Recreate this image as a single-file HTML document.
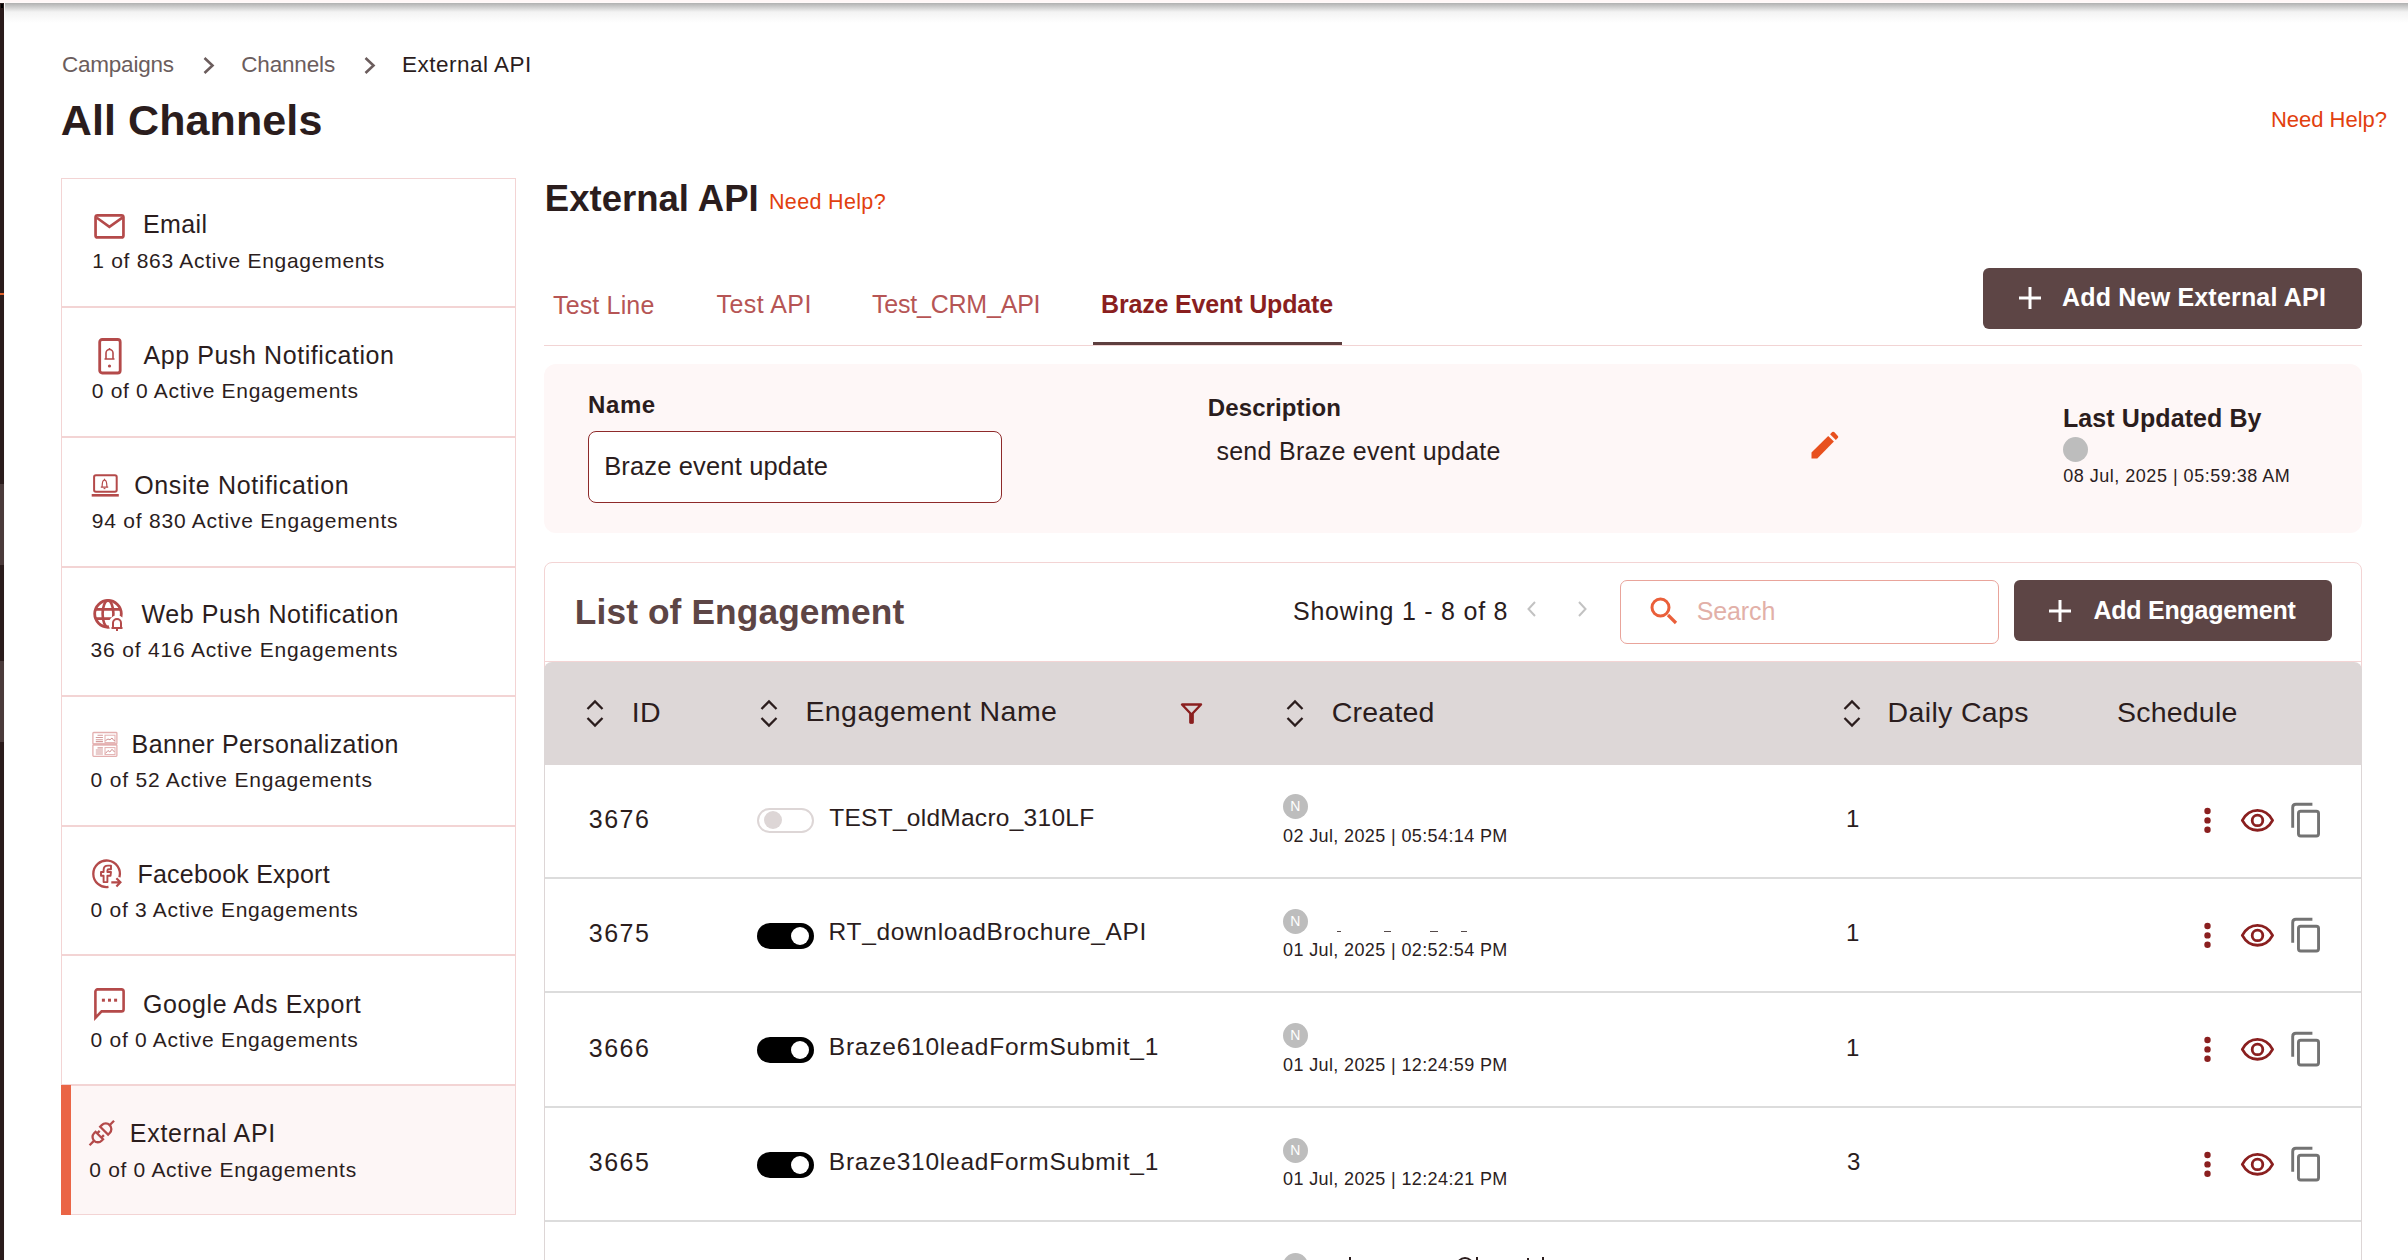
<!DOCTYPE html>
<html><head><meta charset="utf-8"><title>All Channels</title>
<style>
html,body{margin:0;padding:0;background:#fff;}
body{width:2408px;height:1260px;overflow:hidden;position:relative;font-family:"Liberation Sans", sans-serif;}
.t{position:absolute;white-space:nowrap;line-height:1;}
svg{overflow:visible}
</style></head><body>
<div style="position:absolute;left:0px;top:0px;width:2408px;height:2px;background:#fff7f7"></div>
<div style="position:absolute;left:0px;top:2px;width:2408px;height:1px;background:#fffafa"></div>
<div style="position:absolute;left:0px;top:3px;width:2408px;height:20px;background:linear-gradient(#b0b0b0,#f3f3f3 45%,#fff)"></div>
<div style="position:absolute;left:0px;top:3px;width:4px;height:1257px;background:#2a1b1b"></div>
<div style="position:absolute;left:0px;top:484px;width:4px;height:81px;background:#4a3a3a"></div>
<div style="position:absolute;left:0px;top:661px;width:4px;height:81px;background:#4a3a3a"></div>
<div style="position:absolute;left:0px;top:293px;width:4px;height:2px;background:#e0602a"></div>
<div style="position:absolute;left:1px;top:4px;width:1.5px;height:1.5px;background:#000"></div>
<div style="position:absolute;left:1px;top:6px;width:1.5px;height:1.5px;background:#000"></div>
<div style="position:absolute;left:4px;top:3px;width:1px;height:1257px;background:#fafafa"></div>
<div class="t" id="t0" style="left:62.00px;top:54.23px;font-size:22.5px;color:#6b5d5d;font-weight:normal;letter-spacing:-0.224px;">Campaigns</div>
<svg style="position:absolute;left:202px;top:56px;" width="14" height="19" viewBox="0 0 14 19"><path d="M2.5 2 L10.5 9.5 L2.5 17" fill="none" stroke="#6b5d5d" stroke-width="2.6"/></svg>
<div class="t" id="t1" style="left:241.20px;top:54.23px;font-size:22.5px;color:#6b5d5d;font-weight:normal;letter-spacing:-0.154px;">Channels</div>
<svg style="position:absolute;left:363px;top:56px;" width="14" height="19" viewBox="0 0 14 19"><path d="M2.5 2 L10.5 9.5 L2.5 17" fill="none" stroke="#6b5d5d" stroke-width="2.6"/></svg>
<div class="t" id="t2" style="left:402.00px;top:54.23px;font-size:22.5px;color:#2b1d1d;font-weight:normal;letter-spacing:0.491px;">External API</div>
<div class="t" id="t3" style="left:60.80px;top:98.80px;font-size:43px;color:#2b1d1d;font-weight:bold;letter-spacing:0.099px;">All Channels</div>
<div class="t" id="t4" style="left:2271.00px;top:109.18px;font-size:22px;color:#e2400e;font-weight:normal;letter-spacing:-0.020px;">Need Help?</div>
<div style="position:absolute;left:61px;top:178px;width:455px;height:129px;box-sizing:border-box;border:1px solid #f3d4d4;background:#fff"></div>
<div class="t" id="t5" style="left:143.00px;top:211.84px;font-size:25px;color:#2b1d1d;font-weight:normal;letter-spacing:0.405px;">Email</div>
<div class="t" id="t6" style="left:92.20px;top:250.14px;font-size:21px;color:#2b1d1d;font-weight:normal;letter-spacing:0.727px;">1 of 863 Active Engagements</div>
<div style="position:absolute;left:61px;top:307px;width:455px;height:130px;box-sizing:border-box;border:1px solid #f3d4d4;background:#fff"></div>
<div class="t" id="t7" style="left:143.60px;top:342.82px;font-size:25px;color:#2b1d1d;font-weight:normal;letter-spacing:0.569px;">App Push Notification</div>
<div class="t" id="t8" style="left:91.80px;top:379.92px;font-size:21px;color:#2b1d1d;font-weight:normal;letter-spacing:0.684px;">0 of 0 Active Engagements</div>
<div style="position:absolute;left:61px;top:437px;width:455px;height:130px;box-sizing:border-box;border:1px solid #f3d4d4;background:#fff"></div>
<div class="t" id="t9" style="left:134.20px;top:472.60px;font-size:25px;color:#2b1d1d;font-weight:normal;letter-spacing:0.650px;">Onsite Notification</div>
<div class="t" id="t10" style="left:91.80px;top:509.70px;font-size:21px;color:#2b1d1d;font-weight:normal;letter-spacing:0.774px;">94 of 830 Active Engagements</div>
<div style="position:absolute;left:61px;top:567px;width:455px;height:129px;box-sizing:border-box;border:1px solid #f3d4d4;background:#fff"></div>
<div class="t" id="t11" style="left:141.60px;top:602.38px;font-size:25px;color:#2b1d1d;font-weight:normal;letter-spacing:0.560px;">Web Push Notification</div>
<div class="t" id="t12" style="left:90.60px;top:639.48px;font-size:21px;color:#2b1d1d;font-weight:normal;letter-spacing:0.814px;">36 of 416 Active Engagements</div>
<div style="position:absolute;left:61px;top:696px;width:455px;height:130px;box-sizing:border-box;border:1px solid #f3d4d4;background:#fff"></div>
<div class="t" id="t13" style="left:131.60px;top:732.16px;font-size:25px;color:#2b1d1d;font-weight:normal;letter-spacing:0.395px;">Banner Personalization</div>
<div class="t" id="t14" style="left:90.60px;top:769.26px;font-size:21px;color:#2b1d1d;font-weight:normal;letter-spacing:0.792px;">0 of 52 Active Engagements</div>
<div style="position:absolute;left:61px;top:826px;width:455px;height:129px;box-sizing:border-box;border:1px solid #f3d4d4;background:#fff"></div>
<div class="t" id="t15" style="left:137.40px;top:861.94px;font-size:25px;color:#2b1d1d;font-weight:normal;letter-spacing:0.232px;">Facebook Export</div>
<div class="t" id="t16" style="left:90.60px;top:899.04px;font-size:21px;color:#2b1d1d;font-weight:normal;letter-spacing:0.720px;">0 of 3 Active Engagements</div>
<div style="position:absolute;left:61px;top:955px;width:455px;height:130px;box-sizing:border-box;border:1px solid #f3d4d4;background:#fff"></div>
<div class="t" id="t17" style="left:143.00px;top:991.72px;font-size:25px;color:#2b1d1d;font-weight:normal;letter-spacing:0.585px;">Google Ads Export</div>
<div class="t" id="t18" style="left:90.60px;top:1028.82px;font-size:21px;color:#2b1d1d;font-weight:normal;letter-spacing:0.720px;">0 of 0 Active Engagements</div>
<div style="position:absolute;left:61px;top:1085px;width:455px;height:130px;box-sizing:border-box;border:1px solid #f3d4d4;background:#fdf6f6"></div>
<div class="t" id="t19" style="left:129.80px;top:1120.50px;font-size:25px;color:#2b1d1d;font-weight:normal;letter-spacing:0.719px;">External API</div>
<div class="t" id="t20" style="left:89.20px;top:1158.60px;font-size:21px;color:#2b1d1d;font-weight:normal;letter-spacing:0.713px;">0 of 0 Active Engagements</div>
<div style="position:absolute;left:61px;top:1085px;width:10px;height:130px;background:#ea6546"></div>
<svg style="position:absolute;left:93px;top:213px;" width="33" height="27" viewBox="0 0 33 27"><rect x="2.55" y="2.35" width="27.9" height="22.1" rx="2" fill="none" stroke="#b44a4a" stroke-width="2.7"/><path d="M3.8 4.8 L16.4 13.8 L29.4 4.6" fill="none" stroke="#b44a4a" stroke-width="2.6"/></svg>
<svg style="position:absolute;left:97px;top:337px;" width="26" height="38" viewBox="0 0 26 38"><rect x="2.7" y="2.5" width="20.5" height="33.5" rx="2.5" fill="none" stroke="#b44a4a" stroke-width="2.8"/><path d="M9 22 L9 16 A3.5 3.5 0 0 1 16 16 L16 22 Z M7.5 22 H17.5" fill="none" stroke="#b44a4a" stroke-width="1.6"/><circle cx="12.5" cy="29" r="1.6" fill="#b44a4a"/><path d="M12.5 11 V12.5" stroke="#b44a4a" stroke-width="1.5"/></svg>
<svg style="position:absolute;left:90px;top:473px;" width="30" height="25" viewBox="0 0 30 25"><rect x="4.1" y="2.2" width="22.6" height="16.6" rx="1.8" fill="none" stroke="#b44a4a" stroke-width="2"/><path d="M1.7 22.3 H28.8" stroke="#b44a4a" stroke-width="2.6"/><path d="M12 14.2 L12.4 10 Q12.6 7.6 14 7.1 L14.5 6.2 L15 7.1 Q16.4 7.6 16.6 10 L17 14.2 Z M10.8 14.2 H18.2" fill="none" stroke="#b44a4a" stroke-width="1.2" stroke-linejoin="round"/><path d="M13.6 15.6 H15.4" stroke="#b44a4a" stroke-width="1.1"/></svg>
<svg style="position:absolute;left:91px;top:597px;" width="35" height="35" viewBox="0 0 35 35"><circle cx="17" cy="16.8" r="13.3" fill="none" stroke="#b44a4a" stroke-width="2.8"/><ellipse cx="17" cy="16.8" rx="5.4" ry="13.3" fill="none" stroke="#b44a4a" stroke-width="2.6"/><path d="M4 12.4 H30 M4 21.6 H22" stroke="#b44a4a" stroke-width="2.6"/><circle cx="26" cy="27" r="8.5" fill="#fff"/><path d="M22 31 V26 A4 4 0 0 1 30 26 V31 Z M20.5 31 H31.5" fill="#fff" stroke="#b44a4a" stroke-width="2"/><path d="M26 32 V34" stroke="#b44a4a" stroke-width="2"/></svg>
<svg style="position:absolute;left:91px;top:731px;" width="28" height="28" viewBox="0 0 28 28"><rect x="1.9" y="1.5" width="24" height="11.5" rx="0.8" fill="none" stroke="#e3afaf" stroke-width="1.3"/><rect x="1.9" y="13.8" width="24" height="11.5" rx="0.8" fill="none" stroke="#e3afaf" stroke-width="1.3"/><path d="M1.9 13.4 H25.9" stroke="#e3afaf" stroke-width="2"/><path d="M6.5 4.3 H11.9 M4.8 6.5 H11.9 M4.8 8.8 H11.9 M4.8 10.6 H11.9 M6.5 16.9 H11.9 M4.8 19 H11.9 M4.8 21 H11.9 M4.8 23 H11.9" stroke="#d49a9a" stroke-width="1.1"/><rect x="14" y="4.2" width="10" height="7.4" fill="none" stroke="#e3afaf" stroke-width="1"/><rect x="14" y="16.6" width="10" height="7" fill="none" stroke="#e3afaf" stroke-width="1"/><path d="M14.5 9.6 L17 8 L19 8.8 L21 7 L22.5 9.2 L24 9.5 M14.5 22.4 L17 19.5 L18.8 21 L21 18.3 L23.5 21" fill="none" stroke="#cf8f8f" stroke-width="1"/></svg>
<svg style="position:absolute;left:80px;top:850px;" width="55" height="50" viewBox="0 0 55 50"><path d="M28.5 36.96 A13.3 13.3 0 1 1 39.45 27.24" fill="none" stroke="#b44a4a" stroke-width="2.3"/><path d="M23.6 32.1 V25.8 H21 V22 H23.6 V20 Q23.6 15.6 28 15.6 H31 V19.2 H28.9 Q27.4 19.2 27.4 20.6 V22 H31 L30.5 25.8 H27.4 V32.1 Z" fill="none" stroke="#b44a4a" stroke-width="1.9" stroke-linejoin="round"/><path d="M31.3 32.3 H40.2 M36.4 28.3 L40.4 32.3 L36.4 36.4" fill="none" stroke="#b44a4a" stroke-width="2.2"/></svg>
<svg style="position:absolute;left:92px;top:986px;" width="35" height="35" viewBox="0 0 35 35"><path d="M3.4 31.8 V5.6 A2.2 2.2 0 0 1 5.6 3.4 H29.4 A2.2 2.2 0 0 1 31.6 5.6 V23.2 A2.2 2.2 0 0 1 29.4 25.4 H9.6 Z" fill="none" stroke="#b44a4a" stroke-width="2.6" stroke-linejoin="miter"/><rect x="9.9" y="12.7" width="3" height="3" fill="#b44a4a"/><rect x="16" y="12.7" width="3" height="3" fill="#b44a4a"/><rect x="22.1" y="12.7" width="3" height="3" fill="#b44a4a"/></svg>
<svg style="position:absolute;left:80px;top:1110px;" width="50" height="50" viewBox="0 0 50 50"><g transform="translate(21.8 23) rotate(-45)" fill="none" stroke="#b44a4a" stroke-width="2.3"><path d="M-17.3 0 H-10.5 M17.3 0 H11"/><path d="M-3.6 -5.3 V5.3 H-5.6 A5.3 5.3 0 0 1 -5.6 -5.3 Z"/><path d="M-3.6 -3 H0 M-3.6 3 H0"/><path d="M3.3 -5.6 V5.6 H5.6 A5.6 5.6 0 0 0 5.6 -5.6 Z"/></g></svg>
<div class="t" id="t21" style="left:544.80px;top:181.30px;font-size:36.5px;color:#2b1d1d;font-weight:bold;letter-spacing:0.017px;">External API</div>
<div class="t" id="t22" style="left:769.00px;top:192.48px;font-size:21.5px;color:#e2400e;font-weight:normal;letter-spacing:0.340px;">Need Help?</div>
<div class="t" id="t23" style="left:553.00px;top:292.64px;font-size:25px;color:#b65555;font-weight:normal;letter-spacing:0.157px;">Test Line</div>
<div class="t" id="t24" style="left:716.60px;top:291.84px;font-size:25px;color:#b65555;font-weight:normal;letter-spacing:0.438px;">Test API</div>
<div class="t" id="t25" style="left:872.00px;top:291.84px;font-size:25px;color:#b65555;font-weight:normal;letter-spacing:-0.213px;">Test_CRM_API</div>
<div class="t" id="t26" style="left:1101.00px;top:292.24px;font-size:25px;color:#8a1f1f;font-weight:bold;letter-spacing:-0.158px;">Braze Event Update</div>
<div style="position:absolute;left:544px;top:345px;width:1818px;height:1px;background:#f2d4d4"></div>
<div style="position:absolute;left:1093px;top:342px;width:249px;height:3px;background:#5e3f3f"></div>
<div style="position:absolute;left:1983px;top:268px;width:379px;height:61px;background:#5d4545;border-radius:6px"></div>
<svg style="position:absolute;left:2018px;top:286px;" width="24" height="24" viewBox="0 0 24 24"><path d="M12 1 V23 M1 12 H23" stroke="#fff" stroke-width="3"/></svg>
<div class="t" id="t27" style="left:2062.00px;top:285.12px;font-size:25px;color:#fff;font-weight:bold;letter-spacing:0.190px;">Add New External API</div>
<div style="position:absolute;left:544px;top:364px;width:1818px;height:169px;background:#fef7f7;border-radius:12px"></div>
<div class="t" id="t28" style="left:588.00px;top:392.88px;font-size:24px;color:#2b1d1d;font-weight:bold;letter-spacing:0.600px;">Name</div>
<div style="position:absolute;left:588px;top:431px;width:414px;height:72px;background:#fff;border:1px solid #8e2a2a;border-radius:8px;box-sizing:border-box"></div>
<div class="t" id="t29" style="left:604.20px;top:454.01px;font-size:25.5px;color:#2b1d1d;font-weight:normal;letter-spacing:0.149px;">Braze event update</div>
<div class="t" id="t30" style="left:1207.80px;top:396.44px;font-size:24px;color:#2b1d1d;font-weight:bold;letter-spacing:0.108px;">Description</div>
<div class="t" id="t31" style="left:1216.40px;top:438.84px;font-size:25px;color:#2b1d1d;font-weight:normal;letter-spacing:0.278px;">send Braze event update</div>
<svg style="position:absolute;left:1800px;top:420px;" width="50" height="50" viewBox="0 0 50 50"><path d="M11.5 32.5 L28.2 15.9 L33.9 21.6 L17.3 38.5 L11.5 38.5 Z" fill="#e8501e"/><path d="M30.1 14.2 L32.2 12.1 Q33.2 11.2 34.2 12.1 L37.9 15.9 Q38.7 16.8 37.9 17.7 L35.8 19.9 Z" fill="#e8501e"/></svg>
<div class="t" id="t32" style="left:2063.00px;top:405.96px;font-size:25px;color:#2b1d1d;font-weight:bold;letter-spacing:0.090px;">Last Updated By</div>
<div style="position:absolute;left:2063px;top:437px;width:25px;height:25px;background:#bdbdbd;border-radius:50%"></div>
<div class="t" id="t33" style="left:2063.20px;top:467.16px;font-size:18px;color:#2b1d1d;font-weight:normal;letter-spacing:0.512px;">08 Jul, 2025 | 05:59:38 AM</div>
<div style="position:absolute;left:544px;top:562px;width:1818px;height:700px;box-sizing:border-box;border:1px solid #f3d4d4;border-radius:8px 8px 0 0;background:#fff"></div>
<div class="t" id="t34" style="left:574.80px;top:594.00px;font-size:35.3px;color:#5d4545;font-weight:bold;letter-spacing:0.115px;">List of Engagement</div>
<div class="t" id="t35" style="left:1293.00px;top:599.36px;font-size:25px;color:#2b1d1d;font-weight:normal;letter-spacing:0.763px;">Showing 1 - 8 of 8</div>
<svg style="position:absolute;left:1525px;top:600px;" width="14" height="18" viewBox="0 0 14 18"><path d="M10 2 L3.5 9 L10 16" fill="none" stroke="#c2c2c2" stroke-width="2"/></svg>
<svg style="position:absolute;left:1575px;top:600px;" width="14" height="18" viewBox="0 0 14 18"><path d="M4 2 L10.5 9 L4 16" fill="none" stroke="#c2c2c2" stroke-width="2"/></svg>
<div style="position:absolute;left:1620px;top:580px;width:379px;height:64px;background:#fff;border:1px solid #e9a49b;border-radius:7px;box-sizing:border-box"></div>
<svg style="position:absolute;left:1649px;top:596px;" width="30" height="30" viewBox="0 0 30 30"><circle cx="11.5" cy="11.5" r="8.5" fill="none" stroke="#ea5f3a" stroke-width="3"/><path d="M19 19 L27 27" stroke="#ea5f3a" stroke-width="3.2"/></svg>
<div class="t" id="t36" style="left:1696.80px;top:599.48px;font-size:25px;color:#e2b0a8;font-weight:normal;letter-spacing:-0.144px;">Search</div>
<div style="position:absolute;left:2014px;top:580px;width:318px;height:61px;background:#5d4545;border-radius:6px"></div>
<svg style="position:absolute;left:2048px;top:599px;" width="24" height="24" viewBox="0 0 24 24"><path d="M12 1 V23 M1 12 H23" stroke="#fff" stroke-width="3"/></svg>
<div class="t" id="t37" style="left:2093.40px;top:597.84px;font-size:25px;color:#fff;font-weight:bold;letter-spacing:-0.236px;">Add Engagement</div>
<div style="position:absolute;left:544px;top:661px;width:1818px;height:1px;background:#f3d4d4"></div>
<div style="position:absolute;left:544px;top:662px;width:1818px;height:103px;background:#ddd7d7;border-radius:8px 8px 0 0"></div>
<svg style="position:absolute;left:586px;top:698px;" width="18" height="30" viewBox="0 0 18 30"><path d="M1.5 11 L9 3.5 L16.5 11 M1.5 20 L9 27.5 L16.5 20" fill="none" stroke="#2b1d1d" stroke-width="2.3"/></svg>
<svg style="position:absolute;left:760px;top:698px;" width="18" height="30" viewBox="0 0 18 30"><path d="M1.5 11 L9 3.5 L16.5 11 M1.5 20 L9 27.5 L16.5 20" fill="none" stroke="#2b1d1d" stroke-width="2.3"/></svg>
<svg style="position:absolute;left:1286px;top:698px;" width="18" height="30" viewBox="0 0 18 30"><path d="M1.5 11 L9 3.5 L16.5 11 M1.5 20 L9 27.5 L16.5 20" fill="none" stroke="#2b1d1d" stroke-width="2.3"/></svg>
<svg style="position:absolute;left:1843px;top:698px;" width="18" height="30" viewBox="0 0 18 30"><path d="M1.5 11 L9 3.5 L16.5 11 M1.5 20 L9 27.5 L16.5 20" fill="none" stroke="#2b1d1d" stroke-width="2.3"/></svg>
<div class="t" id="t38" style="left:631.80px;top:697.91px;font-size:28.5px;color:#2b1d1d;font-weight:normal;letter-spacing:0.360px;">ID</div>
<div class="t" id="t39" style="left:805.40px;top:697.19px;font-size:28.5px;color:#2b1d1d;font-weight:normal;letter-spacing:0.425px;">Engagement Name</div>
<svg style="position:absolute;left:1180px;top:701px;" width="23" height="24" viewBox="0 0 23 24"><path d="M2 3.5 H21 L12.5 12.5 V21.5 H10.5 V12.5 Z" fill="none" stroke="#8a1f1f" stroke-width="2.4" stroke-linejoin="round"/><rect x="9.5" y="12" width="4" height="10.5" rx="1" fill="#8a1f1f"/></svg>
<div class="t" id="t40" style="left:1331.80px;top:697.99px;font-size:28.5px;color:#2b1d1d;font-weight:normal;letter-spacing:0.210px;">Created</div>
<div class="t" id="t41" style="left:1887.60px;top:697.99px;font-size:28.5px;color:#2b1d1d;font-weight:normal;letter-spacing:0.340px;">Daily Caps</div>
<div class="t" id="t42" style="left:2117.00px;top:697.99px;font-size:28.5px;color:#2b1d1d;font-weight:normal;letter-spacing:0.205px;">Schedule</div>
<div style="position:absolute;left:544px;top:765px;width:1px;height:500px;background:#ddd6d6"></div>
<div style="position:absolute;left:2361px;top:765px;width:1px;height:500px;background:#ddd6d6"></div>
<div class="t" id="t43" style="left:588.80px;top:806.56px;font-size:25px;color:#2b1d1d;font-weight:normal;letter-spacing:1.500px;">3676</div>
<div style="position:absolute;left:757px;top:808px;width:57px;height:25px;background:#fff;border:2px solid #ddd6d6;border-radius:13px;box-sizing:border-box"></div>
<div style="position:absolute;left:764px;top:811px;width:18px;height:18px;background:#ddd6d6;border-radius:50%"></div>
<div class="t" id="t44" style="left:829.20px;top:805.94px;font-size:24.5px;color:#2b1d1d;font-weight:normal;letter-spacing:0.270px;">TEST_oldMacro_310LF</div>
<div style="position:absolute;left:1283px;top:794px;width:25px;height:25px;background:#bdbdbd;border-radius:50%"></div>
<div class="t" id="t45" style="left:1290.30px;top:798.75px;font-size:14px;color:#fff;font-weight:normal;letter-spacing:0.000px;">N</div>
<div class="t" id="t46" style="left:1283.00px;top:826.84px;font-size:18px;color:#2b1d1d;font-weight:normal;letter-spacing:0.380px;">02 Jul, 2025 | 05:54:14 PM</div>
<div class="t" id="t47" style="left:1846.00px;top:806.76px;font-size:24px;color:#2b1d1d;font-weight:normal;letter-spacing:0.000px;">1</div>
<svg style="position:absolute;left:2200px;top:802.00px" width="15" height="36" viewBox="0 0 15 36"><circle cx="7.5" cy="9" r="3.2" fill="#8a1f1f"/><circle cx="7.5" cy="18.4" r="3.2" fill="#8a1f1f"/><circle cx="7.5" cy="27.7" r="3.2" fill="#8a1f1f"/></svg>
<svg style="position:absolute;left:2239px;top:807.00px" width="37" height="27" viewBox="0 0 37 27"><path d="M3.3 13.35 C10.5 0.15 26.4 0.15 33.6 13.35 C26.4 26.55 10.5 26.55 3.3 13.35 Z" fill="none" stroke="#8a1f1f" stroke-width="2.8" stroke-linejoin="round"/><circle cx="18.5" cy="13.4" r="5.3" fill="none" stroke="#8a1f1f" stroke-width="2.8"/></svg>
<svg style="position:absolute;left:2289px;top:802.00px" width="34" height="38" viewBox="0 0 34 38"><path d="M3.7 25.8 V5.5 Q3.7 2.3 6.9 2.3 H23.4" fill="none" stroke="#737373" stroke-width="2.9"/><rect x="9.45" y="9.25" width="20.1" height="24.7" rx="2.2" fill="none" stroke="#737373" stroke-width="2.9"/></svg>
<div style="position:absolute;left:545px;top:877px;width:1816px;height:2px;background:#dcdcdc"></div>
<div class="t" id="t48" style="left:588.80px;top:921.08px;font-size:25px;color:#2b1d1d;font-weight:normal;letter-spacing:1.500px;">3675</div>
<div style="position:absolute;left:757px;top:923px;width:57px;height:26px;background:#000;border-radius:13px"></div>
<div style="position:absolute;left:791px;top:927px;width:18px;height:18px;background:#fff;border-radius:50%"></div>
<div class="t" id="t49" style="left:828.60px;top:920.46px;font-size:24.5px;color:#2b1d1d;font-weight:normal;letter-spacing:0.662px;">RT_downloadBrochure_API</div>
<div style="position:absolute;left:1283px;top:909px;width:25px;height:25px;background:#bdbdbd;border-radius:50%"></div>
<div class="t" id="t50" style="left:1290.30px;top:913.75px;font-size:14px;color:#fff;font-weight:normal;letter-spacing:0.000px;">N</div>
<div class="t" id="t51" style="left:1283.00px;top:941.36px;font-size:18px;color:#2b1d1d;font-weight:normal;letter-spacing:0.380px;">01 Jul, 2025 | 02:52:54 PM</div>
<div class="t" id="t52" style="left:1846.00px;top:921.28px;font-size:24px;color:#2b1d1d;font-weight:normal;letter-spacing:0.000px;">1</div>
<svg style="position:absolute;left:2200px;top:916.60px" width="15" height="36" viewBox="0 0 15 36"><circle cx="7.5" cy="9" r="3.2" fill="#8a1f1f"/><circle cx="7.5" cy="18.4" r="3.2" fill="#8a1f1f"/><circle cx="7.5" cy="27.7" r="3.2" fill="#8a1f1f"/></svg>
<svg style="position:absolute;left:2239px;top:921.60px" width="37" height="27" viewBox="0 0 37 27"><path d="M3.3 13.35 C10.5 0.15 26.4 0.15 33.6 13.35 C26.4 26.55 10.5 26.55 3.3 13.35 Z" fill="none" stroke="#8a1f1f" stroke-width="2.8" stroke-linejoin="round"/><circle cx="18.5" cy="13.4" r="5.3" fill="none" stroke="#8a1f1f" stroke-width="2.8"/></svg>
<svg style="position:absolute;left:2289px;top:916.60px" width="34" height="38" viewBox="0 0 34 38"><path d="M3.7 25.8 V5.5 Q3.7 2.3 6.9 2.3 H23.4" fill="none" stroke="#737373" stroke-width="2.9"/><rect x="9.45" y="9.25" width="20.1" height="24.7" rx="2.2" fill="none" stroke="#737373" stroke-width="2.9"/></svg>
<div style="position:absolute;left:545px;top:991px;width:1816px;height:2px;background:#dcdcdc"></div>
<div class="t" id="t53" style="left:588.80px;top:1035.60px;font-size:25px;color:#2b1d1d;font-weight:normal;letter-spacing:1.500px;">3666</div>
<div style="position:absolute;left:757px;top:1037px;width:57px;height:26px;background:#000;border-radius:13px"></div>
<div style="position:absolute;left:791px;top:1041px;width:18px;height:18px;background:#fff;border-radius:50%"></div>
<div class="t" id="t54" style="left:828.80px;top:1034.98px;font-size:24.5px;color:#2b1d1d;font-weight:normal;letter-spacing:0.768px;">Braze610leadFormSubmit_1</div>
<div style="position:absolute;left:1283px;top:1023px;width:25px;height:25px;background:#bdbdbd;border-radius:50%"></div>
<div class="t" id="t55" style="left:1290.30px;top:1027.75px;font-size:14px;color:#fff;font-weight:normal;letter-spacing:0.000px;">N</div>
<div class="t" id="t56" style="left:1283.00px;top:1055.88px;font-size:18px;color:#2b1d1d;font-weight:normal;letter-spacing:0.380px;">01 Jul, 2025 | 12:24:59 PM</div>
<div class="t" id="t57" style="left:1846.00px;top:1035.80px;font-size:24px;color:#2b1d1d;font-weight:normal;letter-spacing:0.000px;">1</div>
<svg style="position:absolute;left:2200px;top:1031.20px" width="15" height="36" viewBox="0 0 15 36"><circle cx="7.5" cy="9" r="3.2" fill="#8a1f1f"/><circle cx="7.5" cy="18.4" r="3.2" fill="#8a1f1f"/><circle cx="7.5" cy="27.7" r="3.2" fill="#8a1f1f"/></svg>
<svg style="position:absolute;left:2239px;top:1036.20px" width="37" height="27" viewBox="0 0 37 27"><path d="M3.3 13.35 C10.5 0.15 26.4 0.15 33.6 13.35 C26.4 26.55 10.5 26.55 3.3 13.35 Z" fill="none" stroke="#8a1f1f" stroke-width="2.8" stroke-linejoin="round"/><circle cx="18.5" cy="13.4" r="5.3" fill="none" stroke="#8a1f1f" stroke-width="2.8"/></svg>
<svg style="position:absolute;left:2289px;top:1031.20px" width="34" height="38" viewBox="0 0 34 38"><path d="M3.7 25.8 V5.5 Q3.7 2.3 6.9 2.3 H23.4" fill="none" stroke="#737373" stroke-width="2.9"/><rect x="9.45" y="9.25" width="20.1" height="24.7" rx="2.2" fill="none" stroke="#737373" stroke-width="2.9"/></svg>
<div style="position:absolute;left:545px;top:1106px;width:1816px;height:2px;background:#dcdcdc"></div>
<div class="t" id="t58" style="left:588.80px;top:1150.12px;font-size:25px;color:#2b1d1d;font-weight:normal;letter-spacing:1.500px;">3665</div>
<div style="position:absolute;left:757px;top:1152px;width:57px;height:26px;background:#000;border-radius:13px"></div>
<div style="position:absolute;left:791px;top:1156px;width:18px;height:18px;background:#fff;border-radius:50%"></div>
<div class="t" id="t59" style="left:828.80px;top:1150.30px;font-size:24.5px;color:#2b1d1d;font-weight:normal;letter-spacing:0.768px;">Braze310leadFormSubmit_1</div>
<div style="position:absolute;left:1283px;top:1138px;width:25px;height:25px;background:#bdbdbd;border-radius:50%"></div>
<div class="t" id="t60" style="left:1290.30px;top:1142.75px;font-size:14px;color:#fff;font-weight:normal;letter-spacing:0.000px;">N</div>
<div class="t" id="t61" style="left:1283.00px;top:1170.40px;font-size:18px;color:#2b1d1d;font-weight:normal;letter-spacing:0.380px;">01 Jul, 2025 | 12:24:21 PM</div>
<div class="t" id="t62" style="left:1847.00px;top:1150.32px;font-size:24px;color:#2b1d1d;font-weight:normal;letter-spacing:0.000px;">3</div>
<svg style="position:absolute;left:2200px;top:1145.80px" width="15" height="36" viewBox="0 0 15 36"><circle cx="7.5" cy="9" r="3.2" fill="#8a1f1f"/><circle cx="7.5" cy="18.4" r="3.2" fill="#8a1f1f"/><circle cx="7.5" cy="27.7" r="3.2" fill="#8a1f1f"/></svg>
<svg style="position:absolute;left:2239px;top:1150.80px" width="37" height="27" viewBox="0 0 37 27"><path d="M3.3 13.35 C10.5 0.15 26.4 0.15 33.6 13.35 C26.4 26.55 10.5 26.55 3.3 13.35 Z" fill="none" stroke="#8a1f1f" stroke-width="2.8" stroke-linejoin="round"/><circle cx="18.5" cy="13.4" r="5.3" fill="none" stroke="#8a1f1f" stroke-width="2.8"/></svg>
<svg style="position:absolute;left:2289px;top:1145.80px" width="34" height="38" viewBox="0 0 34 38"><path d="M3.7 25.8 V5.5 Q3.7 2.3 6.9 2.3 H23.4" fill="none" stroke="#737373" stroke-width="2.9"/><rect x="9.45" y="9.25" width="20.1" height="24.7" rx="2.2" fill="none" stroke="#737373" stroke-width="2.9"/></svg>
<div style="position:absolute;left:545px;top:1220px;width:1816px;height:2px;background:#dcdcdc"></div>
<div style="position:absolute;left:1283px;top:1253px;width:25px;height:25px;background:#bdbdbd;border-radius:50%"></div>
<div style="position:absolute;left:1337px;top:931px;width:4px;height:1px;background:#2b1d1d;opacity:0.8"></div>
<div style="position:absolute;left:1384px;top:931px;width:7px;height:1px;background:#2b1d1d;opacity:0.8"></div>
<div style="position:absolute;left:1430px;top:931px;width:8px;height:1px;background:#2b1d1d;opacity:0.8"></div>
<div style="position:absolute;left:1461px;top:931px;width:6px;height:1px;background:#2b1d1d;opacity:0.8"></div>
<div style="position:absolute;left:1348.5px;top:1257px;width:2.2px;height:3px;background:#2b1d1d"></div>
<div style="position:absolute;left:1476px;top:1257px;width:2.2px;height:3px;background:#2b1d1d"></div>
<div style="position:absolute;left:1542px;top:1257px;width:2.2px;height:3px;background:#2b1d1d"></div>
<div style="position:absolute;left:1527px;top:1258px;width:2.2px;height:2px;background:#2b1d1d"></div>
<div style="position:absolute;left:1456px;top:1257px;width:18px;height:18px;box-sizing:border-box;border:2px solid #2b1d1d;border-radius:50%"></div>
</body></html>
